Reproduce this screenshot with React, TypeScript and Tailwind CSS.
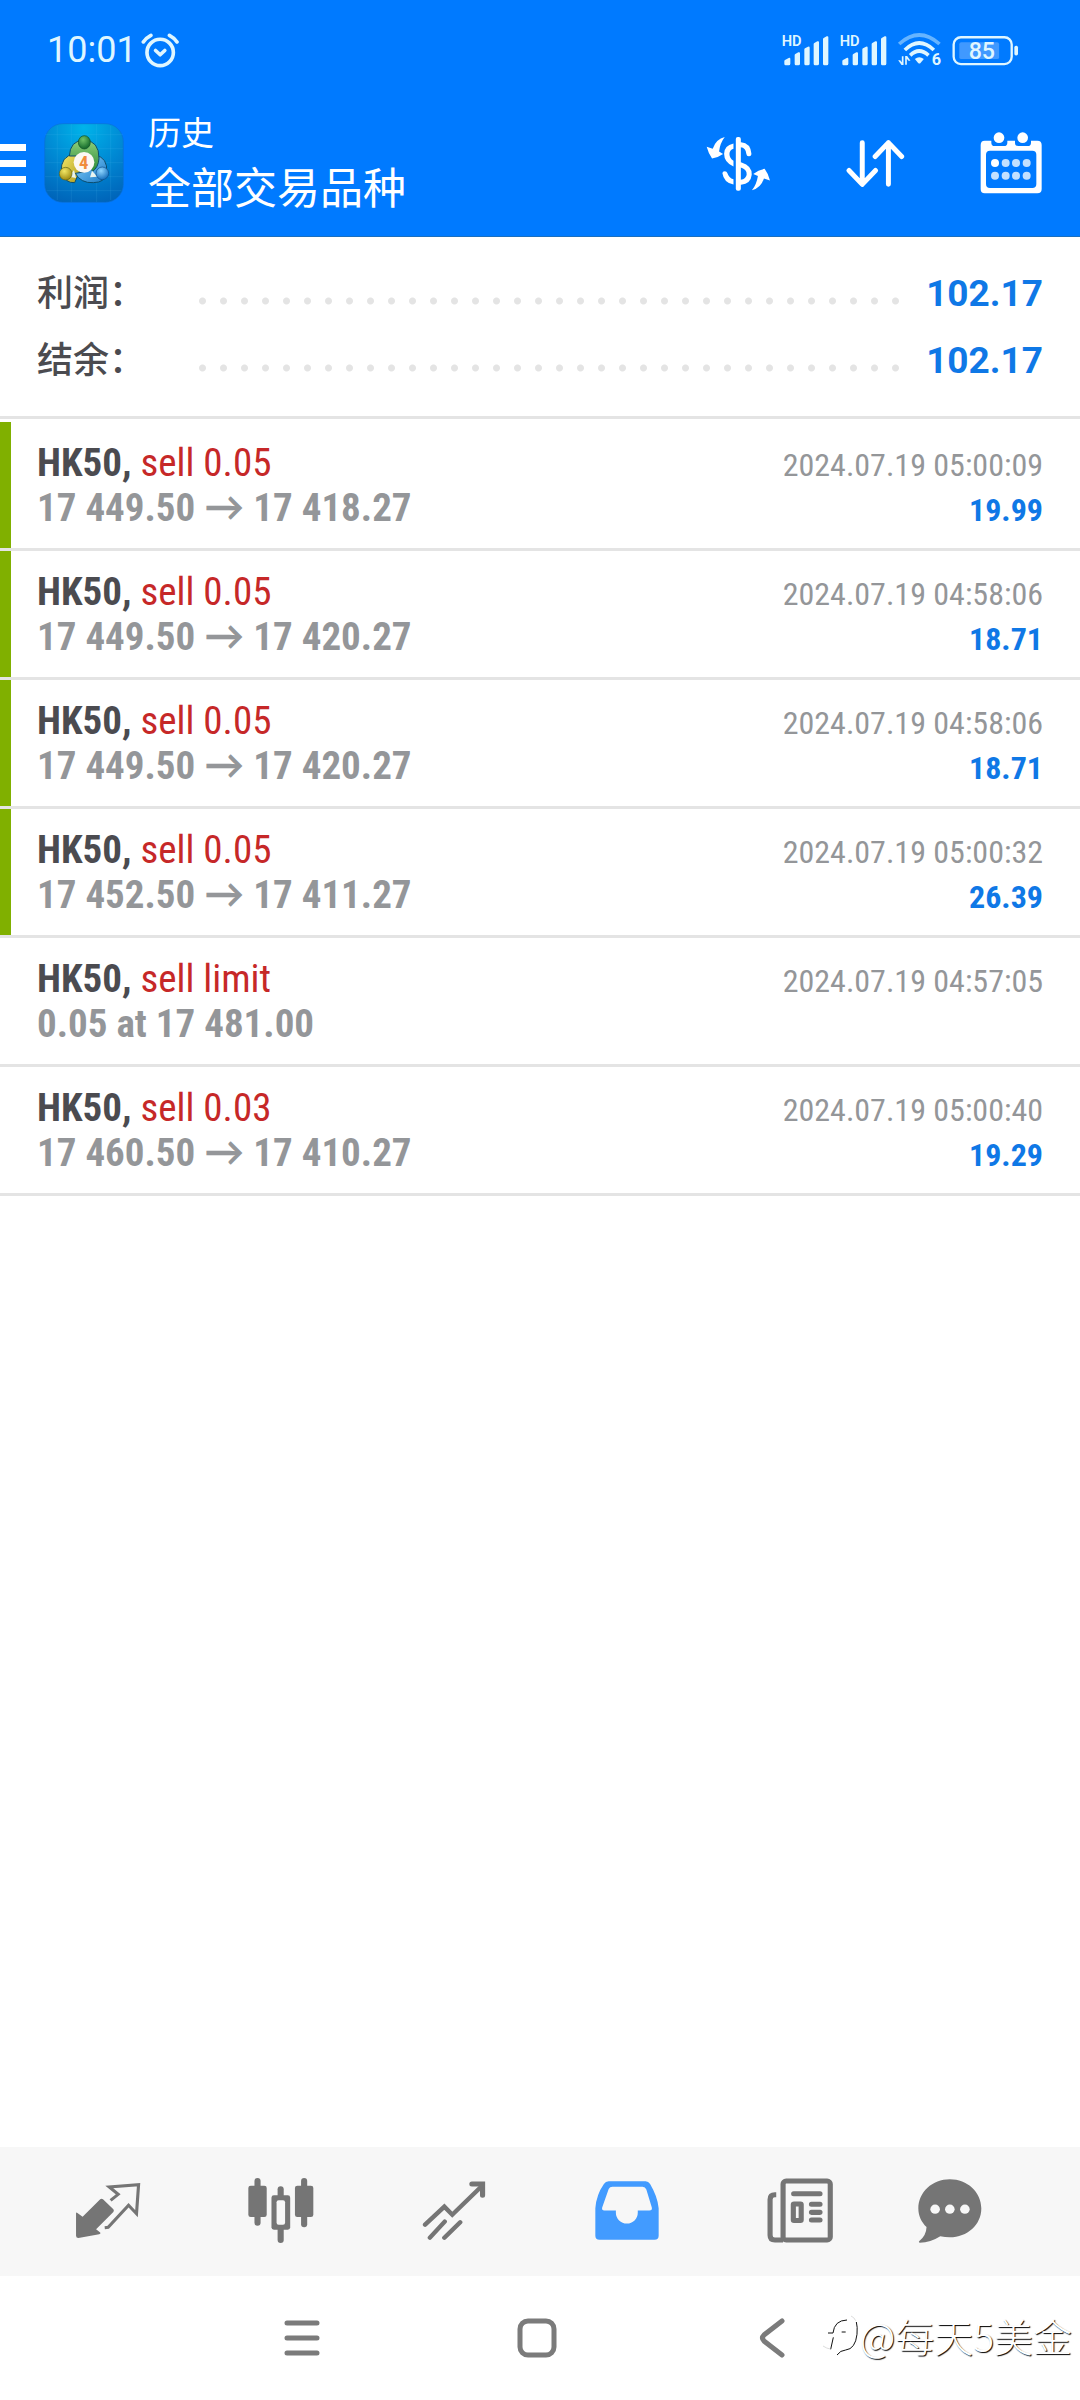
import type { ReactNode } from "react";

type Deal = {
  id: number;
  symbol: string;
  side: string;
  from: string;
  to?: string;
  time: string;
  profit?: string;
  marked?: boolean;
};

const deals: Deal[] = [
  { id: 1, symbol: "HK50", side: "sell 0.05", from: "17 449.50", to: "17 418.27", time: "2024.07.19 05:00:09", profit: "19.99", marked: true },
  { id: 2, symbol: "HK50", side: "sell 0.05", from: "17 449.50", to: "17 420.27", time: "2024.07.19 04:58:06", profit: "18.71", marked: true },
  { id: 3, symbol: "HK50", side: "sell 0.05", from: "17 449.50", to: "17 420.27", time: "2024.07.19 04:58:06", profit: "18.71", marked: true },
  { id: 4, symbol: "HK50", side: "sell 0.05", from: "17 452.50", to: "17 411.27", time: "2024.07.19 05:00:32", profit: "26.39", marked: true },
  { id: 5, symbol: "HK50", side: "sell limit", from: "0.05 at 17 481.00", time: "2024.07.19 04:57:05" },
  { id: 6, symbol: "HK50", side: "sell 0.03", from: "17 460.50", to: "17 410.27", time: "2024.07.19 05:00:40", profit: "19.29" },
];

/* ---------- status bar ---------- */

function AlarmIcon() {
  return (
    <svg className="h-[35px] w-[39px]" viewBox="422 94 118 106" fill="none" stroke="#dff6ff" strokeWidth="11" strokeLinecap="round" strokeLinejoin="round" aria-hidden="true">
      <circle cx="480" cy="153" r="40" />
      <path d="M466 147l14 13 14-13" />
      <path d="M429 121q8-12 23-20M508 101q15 8 23 20" />
    </svg>
  );
}

function SignalIcon() {
  return (
    <svg className="h-[35px] w-[48px]" viewBox="299 96 144 105" fill="#dff6ff" aria-label="HD">
      <text x="301" y="136" fontSize="44" fontWeight="600" fontFamily="Roboto, sans-serif">HD</text>
      <path d="M309 188v-8q0-2 2-3l11-6q5-2 5 3v14q0 5-5 5h-9q-4 0-4-5z" />
      <path d="M340 188v-26q0-2 2-3l9-5q5-2 5 3v31q0 5-5 5h-7q-4 0-4-5z" />
      <path d="M369 188v-43q0-2 2-3l9-5q5-2 5 3v48q0 5-5 5h-7q-4 0-4-5z" />
      <path d="M397 188v-59q0-2 2-3l9-5q5-2 5 3v64q0 5-5 5h-7q-4 0-4-5z" />
      <path d="M425 188v-74q0-2 2-3l9-5q5-2 5 3v79q0 5-5 5h-7q-4 0-4-5z" />
    </svg>
  );
}

function WifiIcon() {
  return (
    <svg className="h-[38px] w-[45px]" viewBox="644 98 134 114" fill="none" stroke="#dff6ff" strokeWidth="11" aria-label="Wi-Fi 6">
      <path d="M650 137q60-54 121 0" stroke="#66b4ff" />
      <path d="M667 155q43-42 87 0" />
      <path d="M683 171q27-26 55 0" />
      <path d="M697 182q13-11 27 0l-10 12q-3 3-7 0z" fill="#dff6ff" stroke="none" />
      <path d="M647 186h6l5 6v-18h5v26h-6zM684 187h-6l-5-6v18h-5v-26h6z" fill="#dff6ff" stroke="none" />
      <text x="748" y="199" fontSize="49" fontWeight="700" fontFamily="Roboto, sans-serif" fill="#dff6ff" stroke="none">6</text>
    </svg>
  );
}

function BatteryIcon() {
  return (
    <svg className="h-[31px] w-[67px]" viewBox="815 102 202 92" aria-label="85%">
      <rect x="820" y="108" width="175" height="81" rx="22" fill="none" stroke="#dff6ff" strokeWidth="7" />
      <rect x="837" y="123" width="120" height="51" rx="6" fill="#4099ff" />
      <rect x="1003" y="134" width="11" height="29" rx="5" fill="#dff6ff" />
      <text x="905" y="174" textAnchor="middle" fontSize="70" fontWeight="500" fontFamily="Roboto, sans-serif" fill="#dff6ff">85</text>
    </svg>
  );
}

/* ---------- header ---------- */

function AppLogo() {
  return (
    <svg className="h-20 w-20 shrink-0" viewBox="132 371 240 240" aria-label="MetaTrader 4">
      <defs>
        <radialGradient id="sky" cx="0.5" cy="0.05" r="1">
          <stop offset="0" stopColor="#00b4ea" />
          <stop offset="0.55" stopColor="#0086d2" />
          <stop offset="1" stopColor="#0063b8" />
        </radialGradient>
        <linearGradient id="green" x1="0" y1="0" x2="0" y2="1">
          <stop offset="0" stopColor="#8fd07a" />
          <stop offset="1" stopColor="#2b8a3a" />
        </linearGradient>
        <linearGradient id="yellow" x1="0" y1="0" x2="1" y2="1">
          <stop offset="0" stopColor="#f4ea6a" />
          <stop offset="1" stopColor="#b09a1c" />
        </linearGradient>
        <linearGradient id="blue" x1="0" y1="0" x2="1" y2="1">
          <stop offset="0" stopColor="#8ad4ff" />
          <stop offset="1" stopColor="#1878c6" />
        </linearGradient>
        <radialGradient id="greenBall" cx="0.4" cy="0.3" r="0.7">
          <stop offset="0" stopColor="#6fc267" />
          <stop offset="1" stopColor="#12682a" />
        </radialGradient>
        <radialGradient id="yellowBall" cx="0.4" cy="0.3" r="0.7">
          <stop offset="0" stopColor="#f2e765" />
          <stop offset="1" stopColor="#a08c12" />
        </radialGradient>
        <radialGradient id="blueBall" cx="0.4" cy="0.3" r="0.7">
          <stop offset="0" stopColor="#8fd6ff" />
          <stop offset="1" stopColor="#1770be" />
        </radialGradient>
      </defs>
      <rect x="134" y="373" width="236" height="236" rx="54" fill="url(#sky)" stroke="#0a6fd8" strokeWidth="2" />
      <path d="M135 406h234M135 448h234M135 490h234M135 532h234M140 574h224M172 380v222M214 374v234M290 374v234M332 380v222" stroke="#5cc4f2" strokeOpacity="0.2" strokeWidth="2" />
      <g stroke="#0b4d6e" strokeWidth="3">
        <path d="M184 520q-4-52 42-56l18 40-20 46q-28 2-40-30z" fill="url(#yellow)" />
        <path d="M320 520q4-46-34-52l-34 50-26 4q16 30 54 28 36 0 40-30z" fill="url(#blue)" />
        <path d="M208 470q2-46 44-48 46 2 45 56-2 26-19 38l-34-46z" fill="url(#green)" />
      </g>
      <path d="M222 512l-14 20 20 4zM276 514l16 18-22 2z" fill="#e8f4f0" />
      <ellipse cx="253" cy="429" rx="18" ry="20" fill="url(#greenBall)" stroke="#0d4f25" strokeWidth="2" />
      <circle cx="197" cy="523" r="19" fill="url(#yellowBall)" stroke="#5f6418" strokeWidth="2" />
      <circle cx="307" cy="522" r="19" fill="url(#blueBall)" stroke="#0c4f8c" strokeWidth="2" />
      <circle cx="252" cy="489" r="31" fill="#fbf8f4" />
      <text x="251" y="509" textAnchor="middle" fontSize="56" fontWeight="700" fontFamily="'Roboto Condensed', Roboto, sans-serif" fill="#f08c3c">4</text>
    </svg>
  );
}

function CurrencyIcon() {
  return (
    <svg className="h-[55px] w-[65px]" viewBox="82 408 194 164" fill="#fff" aria-hidden="true">
      <rect x="171" y="411" width="15" height="160" rx="6" />
      <path d="M164 430q-28 6-28 31 0 26 28 38v-17q-12-7-12-20 0-12 12-16z" />
      <path d="M186 434q22 2 24 27M186 494q26 8 25 29-2 21-25 23" fill="none" stroke="#fff" strokeWidth="15" strokeLinecap="round" />
      <path d="M131 519q4 28 33 34v-16q-14-4-18-18-2-6-8-6-7 0-7 6z" />
      <path d="M138 411q-26 6-36 35l-18-6q6 22 16 35 18-2 33-13l-12-8q3-25 17-43z" />
      <path d="M219 570q26-6 36-35l18 6q-6-22-16-35-18 2-34 15l14 6q-4 25-18 43z" />
    </svg>
  );
}

function SortIcon() {
  return (
    <svg className="h-[49px] w-[59px]" viewBox="498 416 178 148" fill="none" stroke="#fff" strokeWidth="15" strokeLinecap="round" strokeLinejoin="round" aria-hidden="true">
      <path d="M547 427v126M507 511l40 42 40-42M626 553V427M586 469l40-42 40 42" />
    </svg>
  );
}

function CalendarIcon() {
  return (
    <svg className="h-[62px] w-[62px]" viewBox="898 394 186 186" aria-hidden="true">
      <path fillRule="evenodd" fill="#fff" d="M912 420h20v6q0 10 10 10h28q10 0 10-10v-6h23v6q0 10 10 10h28q10 0 10-10v-6h19q13 0 13 13v132q0 13-13 13H912q-12 0-12-13V433q0-13 12-13zM928 450q-12 0-12 12v88q0 12 12 12h127q12 0 12-12v-88q0-12-12-12z" />
      <g fill="#fff">
        <circle cx="955" cy="411" r="16" />
        <circle cx="1026" cy="411" r="16" />
        <circle cx="943" cy="487" r="12" />
      </g>
      <g fill="#c2e0ff">
        <circle cx="975" cy="487" r="12" />
        <circle cx="1006" cy="487" r="12" />
        <circle cx="1038" cy="487" r="12" />
        <circle cx="943" cy="525" r="12" />
        <circle cx="975" cy="525" r="12" />
        <circle cx="1006" cy="525" r="12" />
        <circle cx="1038" cy="525" r="12" />
      </g>
    </svg>
  );
}

/* ---------- tab bar ---------- */

function QuotesIcon() {
  return (
    <svg className="h-[57px] w-[66px]" preserveAspectRatio="none" viewBox="217 159 191 171" aria-hidden="true">
      <path d="M220 253q0-4 4-1l15 11 51-52q4-4 8 0l30 30q3 4 0 8l-50 52 11 9q4 4-2 6l-60 11q-7 0-7-7z" fill="#757575" />
      <path d="M320 214l22-18-26-22 85-7-6 87-23-25-59 66-10 1" fill="none" stroke="#757575" strokeWidth="9" />
    </svg>
  );
}

function ChartIcon() {
  return (
    <svg className="h-[65px] w-[66px]" preserveAspectRatio="none" viewBox="717 145 194 195" fill="#757575" aria-hidden="true">
      <rect x="736" y="145" width="18" height="143" rx="9" />
      <rect x="718" y="168" width="54" height="94" rx="7" />
      <rect x="873" y="145" width="18" height="148" rx="9" />
      <rect x="855" y="168" width="54" height="94" rx="7" />
      <rect x="804" y="170" width="18" height="170" rx="9" />
      <rect x="786" y="197" width="55" height="103" rx="7" />
      <rect x="801" y="212" width="25" height="73" rx="6" fill="#f7f7f7" />
    </svg>
  );
}

function TradeIcon() {
  return (
    <svg className="h-[59px] w-[64px]" preserveAspectRatio="none" viewBox="1223 151 186 177" fill="none" stroke="#757575" strokeWidth="13" strokeLinecap="round" aria-hidden="true">
      <path d="M1232 282l56-54 23 24 86-86M1246 321l43-48M1288 321l46-46" />
      <path d="M1368 160h31v34" strokeWidth="15" />
    </svg>
  );
}

function HistoryIcon() {
  return (
    <svg className="h-[59px] w-[64px]" preserveAspectRatio="none" viewBox="160 152 187 176" aria-hidden="true">
      <path fill="#429bff" fillRule="evenodd" d="M200 153h108q8 0 13 8 22 38 25 72v82q0 12-12 12H173q-12 0-12-12v-82q3-40 25-72 5-8 14-8zM211 169q-8 0-11 7l-19 55q-2 9 6 9h34v7a32 32 0 0 0 64 0v-7h34q9 0 7-9l-16-54q-3-8-11-8z" />
    </svg>
  );
}

function NewsIcon() {
  return (
    <svg className="h-[65px] w-[66px]" preserveAspectRatio="none" viewBox="663 143 193 193" fill="none" stroke="#757575" aria-hidden="true">
      <rect x="710" y="152" width="138" height="175" rx="9" strokeWidth="15" />
      <path d="M690 193h-4q-14 0-14 14v106q0 14 14 14h24" strokeWidth="15" />
      <path d="M741 190h77M793 221h25M793 245h25M793 268h25" strokeWidth="15" strokeLinecap="round" />
      <rect x="740" y="220" width="23" height="49" rx="2" strokeWidth="15" />
    </svg>
  );
}

function ChatIcon() {
  return (
    <svg className="h-[64px] w-[64px]" preserveAspectRatio="none" viewBox="1100 143 187 193" aria-hidden="true">
      <path d="M1193 144c51 0 92 39 92 88s-41 87-92 87q-14 0-28-3-28 19-60 19-5-1-1-5 20-16 21-42c-15-15-24-34-24-56 0-49 41-88 92-88z" fill="#757575" />
      <g fill="#f7f7f7">
        <circle cx="1150" cy="234" r="14" />
        <circle cx="1193" cy="234" r="14" />
        <circle cx="1237" cy="234" r="14" />
      </g>
    </svg>
  );
}

function Tab({ label, children, wide = true }: { label: string; children: ReactNode; wide?: boolean }) {
  return (
    <button type="button" aria-label={label} className={wide ? "flex grow-[173] basis-0 items-center justify-center" : "flex grow-[127] basis-0 items-center justify-center"}>
      {children}
    </button>
  );
}

/* ---------- content ---------- */

function SummaryRow({ label, value }: { label: string; value: string }) {
  return (
    <div className="flex h-[67px] items-baseline leading-[62px]">
      <dt className="w-[155px] font-['Noto_Sans_CJK_SC',sans-serif] text-[36px] font-medium text-[#4b4b50]">{label}</dt>
      <dd className="flex grow items-baseline text-[37px] font-bold text-[#0f78e6]">
        <span className="mr-[24px] h-[10px] grow bg-[radial-gradient(circle,#e4e4e4_3px,transparent_4px)] bg-[length:21px_10px] bg-repeat-x" />
        {value}
      </dd>
    </div>
  );
}

function DealRow({ deal }: { deal: Deal }) {
  return (
    <li className="relative border-b-[3px] border-[#e4e4e4] px-[37px] pt-[19px] pb-[17px] font-['Roboto_Condensed',Roboto,sans-serif]">
      {deal.marked && <span className="absolute inset-y-0 left-0 w-[11px] bg-[#80b000]" />}
      <div className="flex h-[45px] items-baseline justify-between leading-[45px]">
        <p className="text-[39px] text-[#c62828]">
          <span className="font-bold text-[#4b4b50]">{deal.symbol},</span> {deal.side}
        </p>
        <time className="text-[32px] text-[#949699]">{deal.time}</time>
      </div>
      <div className="flex h-[45px] items-baseline justify-between leading-[45px]">
        <p className="text-[39px] font-bold text-[#949699]">
          {deal.from}
          {deal.to && (
            <>
              {" "}
              <span className="font-[Lato,sans-serif] text-[40px] leading-none">→</span> {deal.to}
            </>
          )}
        </p>
        {deal.profit && <p className="text-[32px] font-bold text-[#0f78e6]">{deal.profit}</p>}
      </div>
    </li>
  );
}

function Watermark() {
  return (
    <div className="absolute right-2 bottom-[43px] flex items-center gap-0.5 text-white">
      <svg className="h-[42px] w-[35px]" viewBox="28 64 105 126" fill="none" stroke="#111" strokeWidth="3" aria-hidden="true">
        <path d="M43 121h15q4-38 42-39M128 88q4 14 2 37-5 44-34 47-16 1-26 15M59 134l-8 36M84 118h12" />
        <path d="M28 160q12 8 22 9M112 70q10 4 14 14" stroke="#ddd" />
      </svg>
      <span className="font-['Noto_Sans_CJK_SC',sans-serif] text-[39px] leading-[44px] font-light text-shadow-[1px_1px_1px_#000]">@每天5美金</span>
    </div>
  );
}

export default function App() {
  return (
    <div className="flex min-h-screen flex-col bg-white font-[Roboto,'Noto_Sans_CJK_SC',sans-serif]">
      <header className="border-b border-[#1a6fbf] bg-[#007aff] text-white">
        <div className="flex h-[92px] items-center justify-between pt-2 pr-[61px] pl-[47px] text-[#dff6ff]">
          <div className="flex items-center gap-1">
            <span className="text-[36px] leading-none">10:01</span>
            <AlarmIcon />
          </div>
          <div className="flex items-center gap-[10px]">
            <SignalIcon />
            <SignalIcon />
            <WifiIcon />
            <BatteryIcon />
          </div>
        </div>
        <div className="flex h-36 items-center justify-between pr-[38px] pb-0.5">
          <div className="flex items-center">
            <button type="button" aria-label="Menu" className="mr-[18px] flex w-[26px] flex-col gap-[9px]">
              <span className="h-[7px] bg-white" />
              <span className="h-[7px] bg-white" />
              <span className="h-[7px] bg-white" />
            </button>
            <AppLogo />
            <div className="ml-6 pb-2 font-['Noto_Sans_CJK_SC',sans-serif]">
              <h1 className="text-[33px] leading-[52px]">历史</h1>
              <p className="text-[43px] leading-[56px]">全部交易品种</p>
            </div>
          </div>
          <div className="flex items-center gap-[75px]">
            <button type="button" aria-label="Currency"><CurrencyIcon /></button>
            <button type="button" aria-label="Sort"><SortIcon /></button>
            <button type="button" aria-label="Calendar"><CalendarIcon /></button>
          </div>
        </div>
      </header>

      <main className="grow">
        <dl className="border-b-[3px] border-[#e4e4e4] px-[37px] pt-[22px] pb-[23px]">
          <SummaryRow label="利润：" value="102.17" />
          <SummaryRow label="结余：" value="102.17" />
        </dl>
        <ul className="pt-[3px]">
          {deals.map((deal) => (
            <DealRow key={deal.id} deal={deal} />
          ))}
        </ul>
      </main>

      <nav className="flex h-[129px] bg-[#f7f7f7] pr-[66px] pb-0.5 pl-[21px]">
        <Tab label="Quotes"><QuotesIcon /></Tab>
        <Tab label="Charts"><ChartIcon /></Tab>
        <Tab label="Trade"><TradeIcon /></Tab>
        <Tab label="History"><HistoryIcon /></Tab>
        <Tab label="News"><NewsIcon /></Tab>
        <Tab label="Messages" wide={false}><ChatIcon /></Tab>
      </nav>

      <footer className="relative flex h-[124px] items-center justify-center gap-[155px] pr-[7px]">
        <button type="button" aria-label="Recent apps" className="flex w-20 justify-center">
          <svg className="h-[40px] w-[38px]" viewBox="0 0 38 40" stroke="#7b7b7b" strokeWidth="5" strokeLinecap="round" aria-hidden="true">
            <path d="M4 5h30M4 20h30M4 35h30" />
          </svg>
        </button>
        <button type="button" aria-label="Home" className="flex w-20 justify-center">
          <svg className="h-[40px] w-[40px]" viewBox="0 0 40 40" fill="none" stroke="#7b7b7b" strokeWidth="5" aria-hidden="true">
            <rect x="3" y="3" width="34" height="34" rx="8" />
          </svg>
        </button>
        <button type="button" aria-label="Back" className="flex w-20 justify-center">
          <svg className="h-[40px] w-[26px]" viewBox="0 0 26 40" fill="none" stroke="#7b7b7b" strokeWidth="5" strokeLinecap="round" aria-hidden="true">
            <path d="M23 3L5 17q-3 3 0 6L23 37" />
          </svg>
        </button>
        <Watermark />
      </footer>
    </div>
  );
}
